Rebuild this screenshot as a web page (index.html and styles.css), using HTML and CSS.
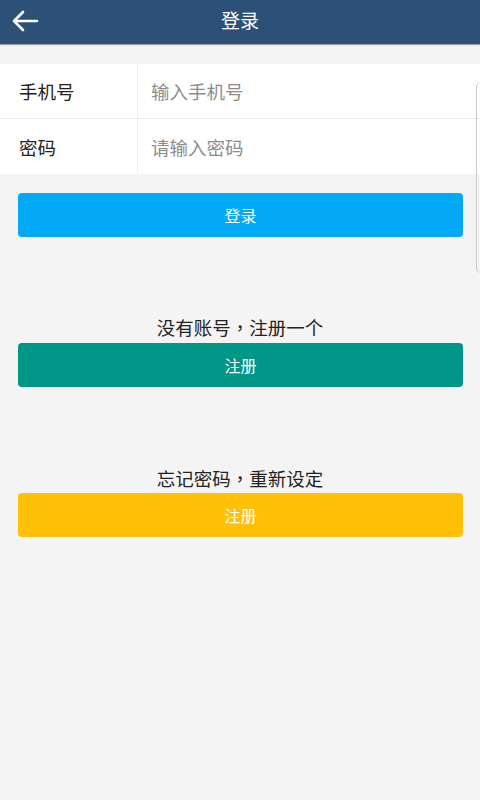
FILE: index.html
```html
<!DOCTYPE html>
<html lang="zh-CN">
<head>
    <meta charset="UTF-8">
    <meta name="viewport" content="width=device-width, initial-scale=1.0">
    <title>登录</title>
    <link rel="stylesheet" href="styles.css">
</head>
<body>
    <header class="topbar">
        <a class="back" href="#">
            <svg width="28" height="22" viewBox="0 0 28 22">
                <path d="M26 11 H3 M12 2 L3 11 L12 20" fill="none" stroke="#ffffff" stroke-width="2.6" stroke-linecap="round" stroke-linejoin="round"/>
            </svg>
        </a>
        <h1>登录</h1>
    </header>

    <div class="form">
        <label class="row">
            <span class="label">手机号</span>
            <input type="text" placeholder="输入手机号">
        </label>
        <label class="row">
            <span class="label">密码</span>
            <input type="password" placeholder="请输入密码">
        </label>
    </div>

    <button class="btn btn-blue login">登录</button>

    <p class="tip tip-first">没有账号<span class="comma" lang="zh-TW">，</span>注册一个</p>
    <button class="btn btn-teal">注册</button>

    <p class="tip tip-second">忘记密码<span class="comma" lang="zh-TW">，</span>重新设定</p>
    <button class="btn btn-yellow">注册</button>

    <div class="edge"></div>
</body>
</html>
```

FILE: styles.css
```css
body {
    margin: 0;
    background-color: #f4f4f4; /* light gray page */
    font-family: "Noto Sans CJK SC", "Noto Sans", sans-serif;
    color: #222222;
    height: 800px;
    overflow: hidden;
    position: relative;
}
.topbar {
    height: 44px;
    background-color: #2d5079; /* navy bar */
    box-shadow: 0 1px 1px rgba(0, 0, 0, 0.35);
    display: flex;
    align-items: center;
    justify-content: center;
    position: relative;
}
.topbar h1 {
    margin: 0;
    color: #ffffff;
    font-size: 19px;
    font-weight: normal;
    line-height: 24px;
    position: relative;
    top: -2px;
}
.back {
    position: absolute;
    left: 11px;
    top: 10px;
    display: flex;
}
.form {
    margin-top: 20px;
    background-color: #ffffff;
}
.row {
    display: flex;
    height: 54px;
    align-items: center;
}
.row + .row {
    border-top: 1px solid #ececec;
    height: 55px;
}
.label {
    width: 118px;
    padding-left: 19px;
    height: 100%;
    display: flex;
    align-items: center;
    border-right: 1px solid #efefef;
    font-size: 18.5px;
}
.row input {
    flex: 1;
    border: none;
    outline: none;
    padding: 0 0 0 13px;
    font-family: inherit;
    font-size: 18.5px;
    color: #222222;
    background: transparent;
    height: 100%;
}
.row input::placeholder {
    color: #8c8c8c;
}
.btn {
    display: block;
    width: 445px;
    height: 44px;
    margin: 0 0 0 18px;
    border: none;
    border-radius: 4px;
    color: #ffffff;
    font-family: inherit;
    font-size: 16px;
}
.btn-blue {
    background-color: #03a9f4;
}
.btn-teal {
    background-color: #009688;
}
.btn-yellow {
    background-color: #ffc107;
}
.login {
    margin-top: 19px;
}
.tip {
    margin: 0 0 5px;
    text-align: center;
    font-size: 18.5px;
    line-height: 22px;
}
.tip .comma {
    font-family: "Noto Sans CJK TC", sans-serif; /* centred comma */
}
.tip-first {
    margin-top: 79px;
}
.tip-second {
    margin-top: 80px;
    margin-bottom: 4px;
}
.edge {
    position: absolute;
    left: 476px;
    top: 82px;
    width: 10px;
    height: 190px;
    border-left: 1px solid #c8c8c8;
    border-bottom: 1px solid #dddddd;
    border-radius: 5px 0 0 5px;
}
```
